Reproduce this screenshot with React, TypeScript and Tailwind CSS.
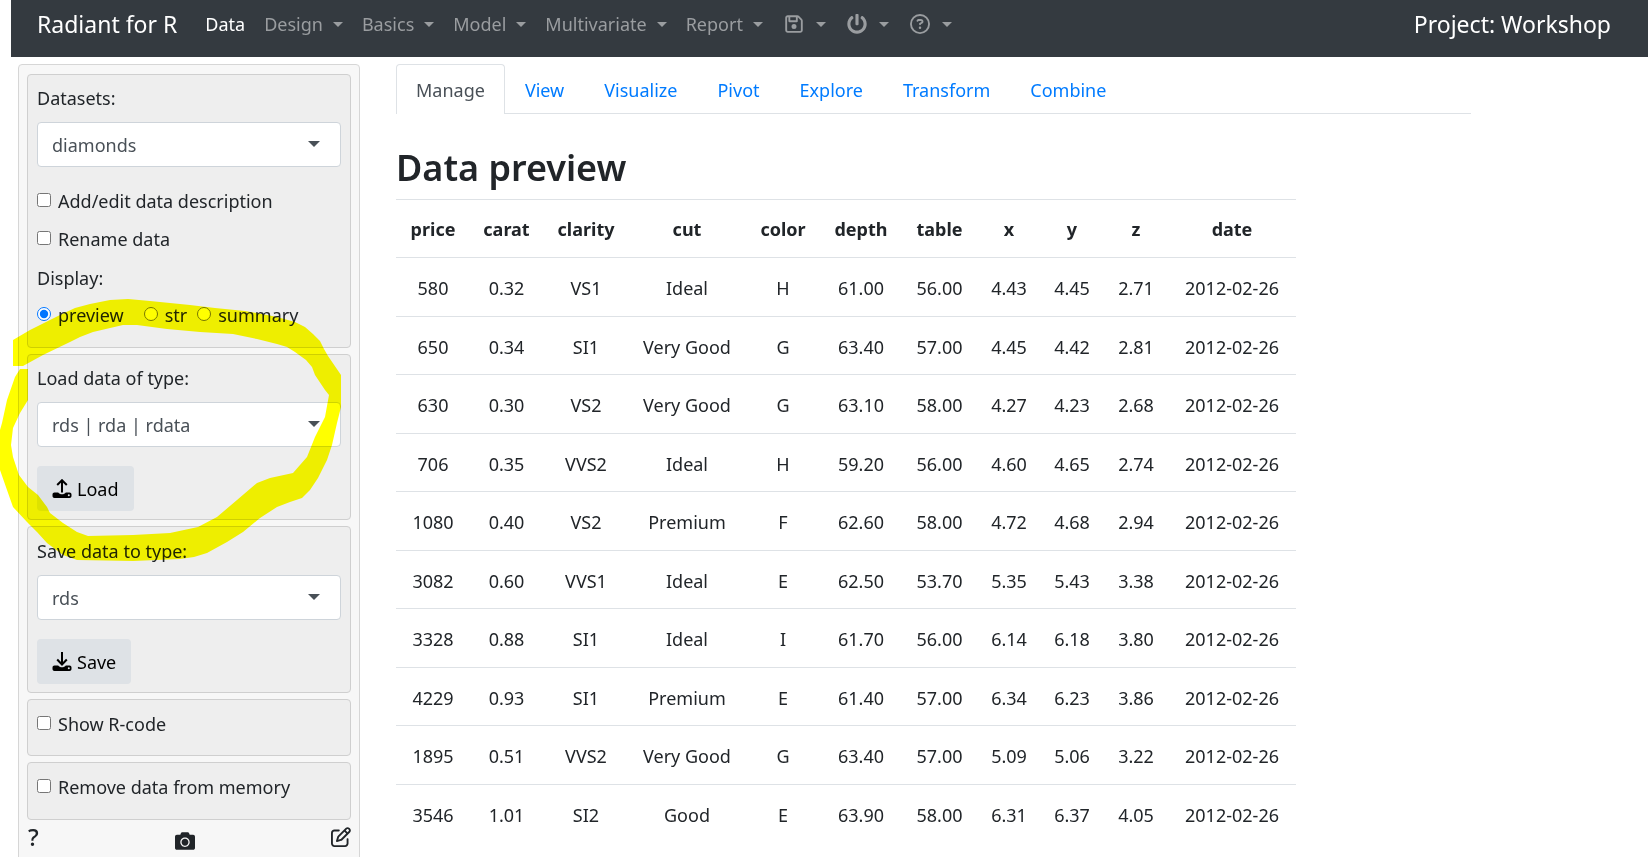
import { useState } from "react";
import type { ReactNode } from "react";
import { FaCamera, FaPowerOff } from "react-icons/fa";
import { FaRegCircleQuestion, FaRegFloppyDisk, FaRegPenToSquare } from "react-icons/fa6";

const columns = [
  { name: "price", width: "w-[74px]" },
  { name: "carat", width: "w-[73px]" },
  { name: "clarity", width: "w-[86px]" },
  { name: "cut", width: "w-[116px]" },
  { name: "color", width: "w-[76px]" },
  { name: "depth", width: "w-[80px]" },
  { name: "table", width: "w-[77px]" },
  { name: "x", width: "w-[62px]" },
  { name: "y", width: "w-[64px]" },
  { name: "z", width: "w-[64px]" },
  { name: "date", width: "w-[128px]" },
];

const rows = [
  ["580", "0.32", "VS1", "Ideal", "H", "61.00", "56.00", "4.43", "4.45", "2.71", "2012-02-26"],
  ["650", "0.34", "SI1", "Very Good", "G", "63.40", "57.00", "4.45", "4.42", "2.81", "2012-02-26"],
  ["630", "0.30", "VS2", "Very Good", "G", "63.10", "58.00", "4.27", "4.23", "2.68", "2012-02-26"],
  ["706", "0.35", "VVS2", "Ideal", "H", "59.20", "56.00", "4.60", "4.65", "2.74", "2012-02-26"],
  ["1080", "0.40", "VS2", "Premium", "F", "62.60", "58.00", "4.72", "4.68", "2.94", "2012-02-26"],
  ["3082", "0.60", "VVS1", "Ideal", "E", "62.50", "53.70", "5.35", "5.43", "3.38", "2012-02-26"],
  ["3328", "0.88", "SI1", "Ideal", "I", "61.70", "56.00", "6.14", "6.18", "3.80", "2012-02-26"],
  ["4229", "0.93", "SI1", "Premium", "E", "61.40", "57.00", "6.34", "6.23", "3.86", "2012-02-26"],
  ["1895", "0.51", "VVS2", "Very Good", "G", "63.40", "57.00", "5.09", "5.06", "3.22", "2012-02-26"],
  ["3546", "1.01", "SI2", "Good", "E", "63.90", "58.00", "6.31", "6.37", "4.05", "2012-02-26"],
];

const tabs = ["View", "Visualize", "Pivot", "Explore", "Transform", "Combine"];

function Caret() {
  return <span className="border-x-5 border-t-5 border-x-transparent border-t-current" />;
}

function NavMenu({ label, children }: { label: string; children: ReactNode }) {
  return (
    <button type="button" aria-label={label} className="flex items-center gap-2.5 text-[#9a9da0]">
      {children}
      <Caret />
    </button>
  );
}

function Panel({ className, children }: { className: string; children: ReactNode }) {
  return (
    <section className={`rounded border border-[#cfcfcf] bg-[#eeeeee] px-[9px] ${className}`}>{children}</section>
  );
}

function SelectField({ id, label, options }: { id: string; label: string; options: string[] }) {
  return (
    <div>
      <label htmlFor={id} className="block">
        {label}
      </label>
      <div className="relative mt-2.5 text-[#495057]">
        <select
          id={id}
          className="block h-[45px] w-full appearance-none rounded border border-[#ced4da] bg-white px-3.5"
        >
          {options.map((option) => (
            <option key={option}>{option}</option>
          ))}
        </select>
        <span className="pointer-events-none absolute top-[19px] right-[21px] border-x-6 border-t-6 border-x-transparent border-t-current" />
      </div>
    </div>
  );
}

function CheckField({ label }: { label: string }) {
  return (
    <label className="flex items-center gap-[7px]">
      <input type="checkbox" className="mb-[3px] size-3.5" />
      {label}
    </label>
  );
}

function TrayIcon({ down = false }: { down?: boolean }) {
  return (
    <svg viewBox="0 0 20 20" className="size-5" fill="none" stroke="currentColor" aria-hidden="true">
      <path
        d="M2.500 13.500h3.700c.8 1.200 2.200 1.800 3.800 1.800s3-.6 3.800-1.800h3.700c1.200 0 2 .9 2 2v1.500c0 1.200-.8 2-2 2h-15c-1.200 0-2-.8-2-2v-1.500c0-1.100.8-2 2-2z"
        fill="currentColor"
        stroke="none"
      />
      <circle cx="16.800" cy="16.200" r="1" fill="#dee2e6" stroke="none" />
      {down ? (
        <path d="M10 0v12M5.200 7.500l4.800 5 4.800-5" strokeWidth="2" />
      ) : (
        <path d="M10 13.500V1.500M5.200 6l4.800-4.800L14.800 6" strokeWidth="2" />
      )}
    </svg>
  );
}

function ActionButton({ label, down }: { label: string; down?: boolean }) {
  return (
    <button type="button" className="mt-[19px] flex h-[45px] items-center gap-[5px] rounded bg-[#dee2e6] px-[15px] text-black">
      <TrayIcon down={down} />
      {label}
    </button>
  );
}

function MarkerLoop() {
  return (
    <svg
      width="360"
      height="600"
      viewBox="0 0 360 600"
      className="pointer-events-none absolute top-0 left-0 mix-blend-multiply"
      fill="#ffff00"
      aria-hidden="true"
    >
      <path
        d="M13 340L30 330L60 315L75 308L90 304L110 300L128 299L150 301L190 305L215 308L245 311L262 314L277 317L295 322L305 327L313 334L320 341L324 349L328 356L341 375L341 407L337 423L332 445L327 460L318 478L310 490L302 498L290 502L277 507L260 518L243 532L227 542L207 553L194 557L180 559L133 561L77 560L63 555L47 543L37 532L27 522L13 507L7 490L0 470L0 430L2 423L7 400L15 377L20 369L28 369
        L28 400L20 413L13 428L11 445L13 457L19 475L28 487L38 495L47 507L50 513L63 523L77 532L88 536L133 535L170 533L198 527L217 517L237 500L257 483L270 478L293 473L307 457L315 437L325 417L329 395L325 390L315 375L312 367L306 360L295 352L287 347L277 344L257 339L233 334L200 332L167 329L137 325L123 325L93 332L80 337L70 342L43 355L23 366L13 366Z"
      />
    </svg>
  );
}

export default function App() {
  const [display, setDisplay] = useState("preview");

  return (
    <div className="relative flex h-screen flex-col overflow-hidden bg-white font-['Noto_Sans','Open_Sans',sans-serif] text-lg leading-7 text-[#212529]">
      <nav className="ml-[11px] flex h-[57px] shrink-0 items-start bg-[#343a40] pr-[37px] pl-[26px]">
        <div className="flex h-12 items-center">
          <a href="#home" className="mr-7 text-[23px] text-white">
            Radiant for R
          </a>
          <div className="flex items-center gap-[19px]">
            <a href="#data" className="text-white">
              Data
            </a>
            <NavMenu label="Design">Design</NavMenu>
            <NavMenu label="Basics">Basics</NavMenu>
            <NavMenu label="Model">Model</NavMenu>
            <NavMenu label="Multivariate">Multivariate</NavMenu>
            <NavMenu label="Report">Report</NavMenu>
            <NavMenu label="Save">
              <FaRegFloppyDisk className="mx-0.5 size-5" />
            </NavMenu>
            <NavMenu label="Power">
              <FaPowerOff className="mx-0.5 size-5" />
            </NavMenu>
            <NavMenu label="Help">
              <FaRegCircleQuestion className="mx-0.5 size-5" />
            </NavMenu>
          </div>
        </div>
        <div className="ml-auto flex h-12 items-center text-[23px] text-white">Project: Workshop</div>
      </nav>

      <div className="flex min-h-0 flex-1 pt-[7px] pl-[18px]">
        <aside className="h-[900px] w-[342px] shrink-0 rounded border border-[#d6d6d6] bg-[#f7f7f7] px-2 pt-[9px]">
          <div className="flex flex-col gap-1.5">
            <Panel className="h-[274px] pt-[9px]">
              <SelectField id="dataset" label="Datasets:" options={["diamonds"]} />
              <div className="mt-5 flex flex-col gap-2.5">
                <CheckField label="Add/edit data description" />
                <CheckField label="Rename data" />
              </div>
              <fieldset>
                <legend className="pt-[11px]">Display:</legend>
                <div className="mt-[9px] flex">
                  {["preview", "str", "summary"].map((option) => (
                    <label key={option} className="mr-2.5 flex items-center gap-[7px] first:mr-5">
                      <input
                        type="radio"
                        name="display"
                        className="mb-[3px] size-3.5"
                        checked={display === option}
                        onChange={() => setDisplay(option)}
                      />
                      {option}
                    </label>
                  ))}
                </div>
              </fieldset>
            </Panel>
            <Panel className="h-[166px] pt-[9px]">
              <SelectField id="load-type" label="Load data of type:" options={["rds | rda | rdata"]} />
              <ActionButton label="Load" />
            </Panel>
            <Panel className="h-[167px] pt-2.5">
              <SelectField id="save-type" label="Save data to type:" options={["rds"]} />
              <ActionButton label="Save" down />
            </Panel>
            <Panel className="h-[57px] pt-2.5">
              <CheckField label="Show R-code" />
            </Panel>
            <Panel className="h-[58px] pt-2.5">
              <CheckField label="Remove data from memory" />
            </Panel>
          </div>
          <div className="mt-px flex items-center justify-between">
            <button type="button" className="pl-px text-2xl font-medium">
              ?
            </button>
            <button type="button" aria-label="Screenshot" className="pt-2">
              <FaCamera className="size-5" />
            </button>
            <button type="button" aria-label="Edit">
              <FaRegPenToSquare className="size-5" />
            </button>
          </div>
        </aside>

        <main className="ml-9 min-w-0 flex-1">
          <div className="mr-[177px] flex h-[50px] border-b border-[#dee2e6]">
            <a
              href="#manage"
              className="flex h-[50px] items-center rounded-t border border-b-0 border-[#dee2e6] bg-white px-[19px] text-[#495057]"
            >
              Manage
            </a>
            {tabs.map((tab) => (
              <a
                key={tab}
                href={`#${tab}`}
                className="flex h-[50px] items-center border border-b-0 border-transparent px-[19px] text-[#007bff]"
              >
                {tab}
              </a>
            ))}
          </div>
          <h2 className="mt-[30px] text-[36px] leading-[48px] font-semibold">Data preview</h2>
          <table className="mt-[7px] w-[900px] table-fixed text-center">
            <colgroup>
              {columns.map((column) => (
                <col key={column.name} className={column.width} />
              ))}
            </colgroup>
            <thead>
              <tr className="h-[58px] border-t border-[#dee2e6]">
                {columns.map((column) => (
                  <th key={column.name} className="font-bold">
                    {column.name}
                  </th>
                ))}
              </tr>
            </thead>
            <tbody>
              {rows.map((row) => (
                <tr key={row[0]} className="h-[58px] border-t border-[#dee2e6] odd:h-[59px]">
                  {row.map((value, index) => (
                    <td key={columns[index].name} className="pt-0.5 whitespace-nowrap">
                      {value}
                    </td>
                  ))}
                </tr>
              ))}
            </tbody>
          </table>
        </main>
      </div>
      <MarkerLoop />
    </div>
  );
}
